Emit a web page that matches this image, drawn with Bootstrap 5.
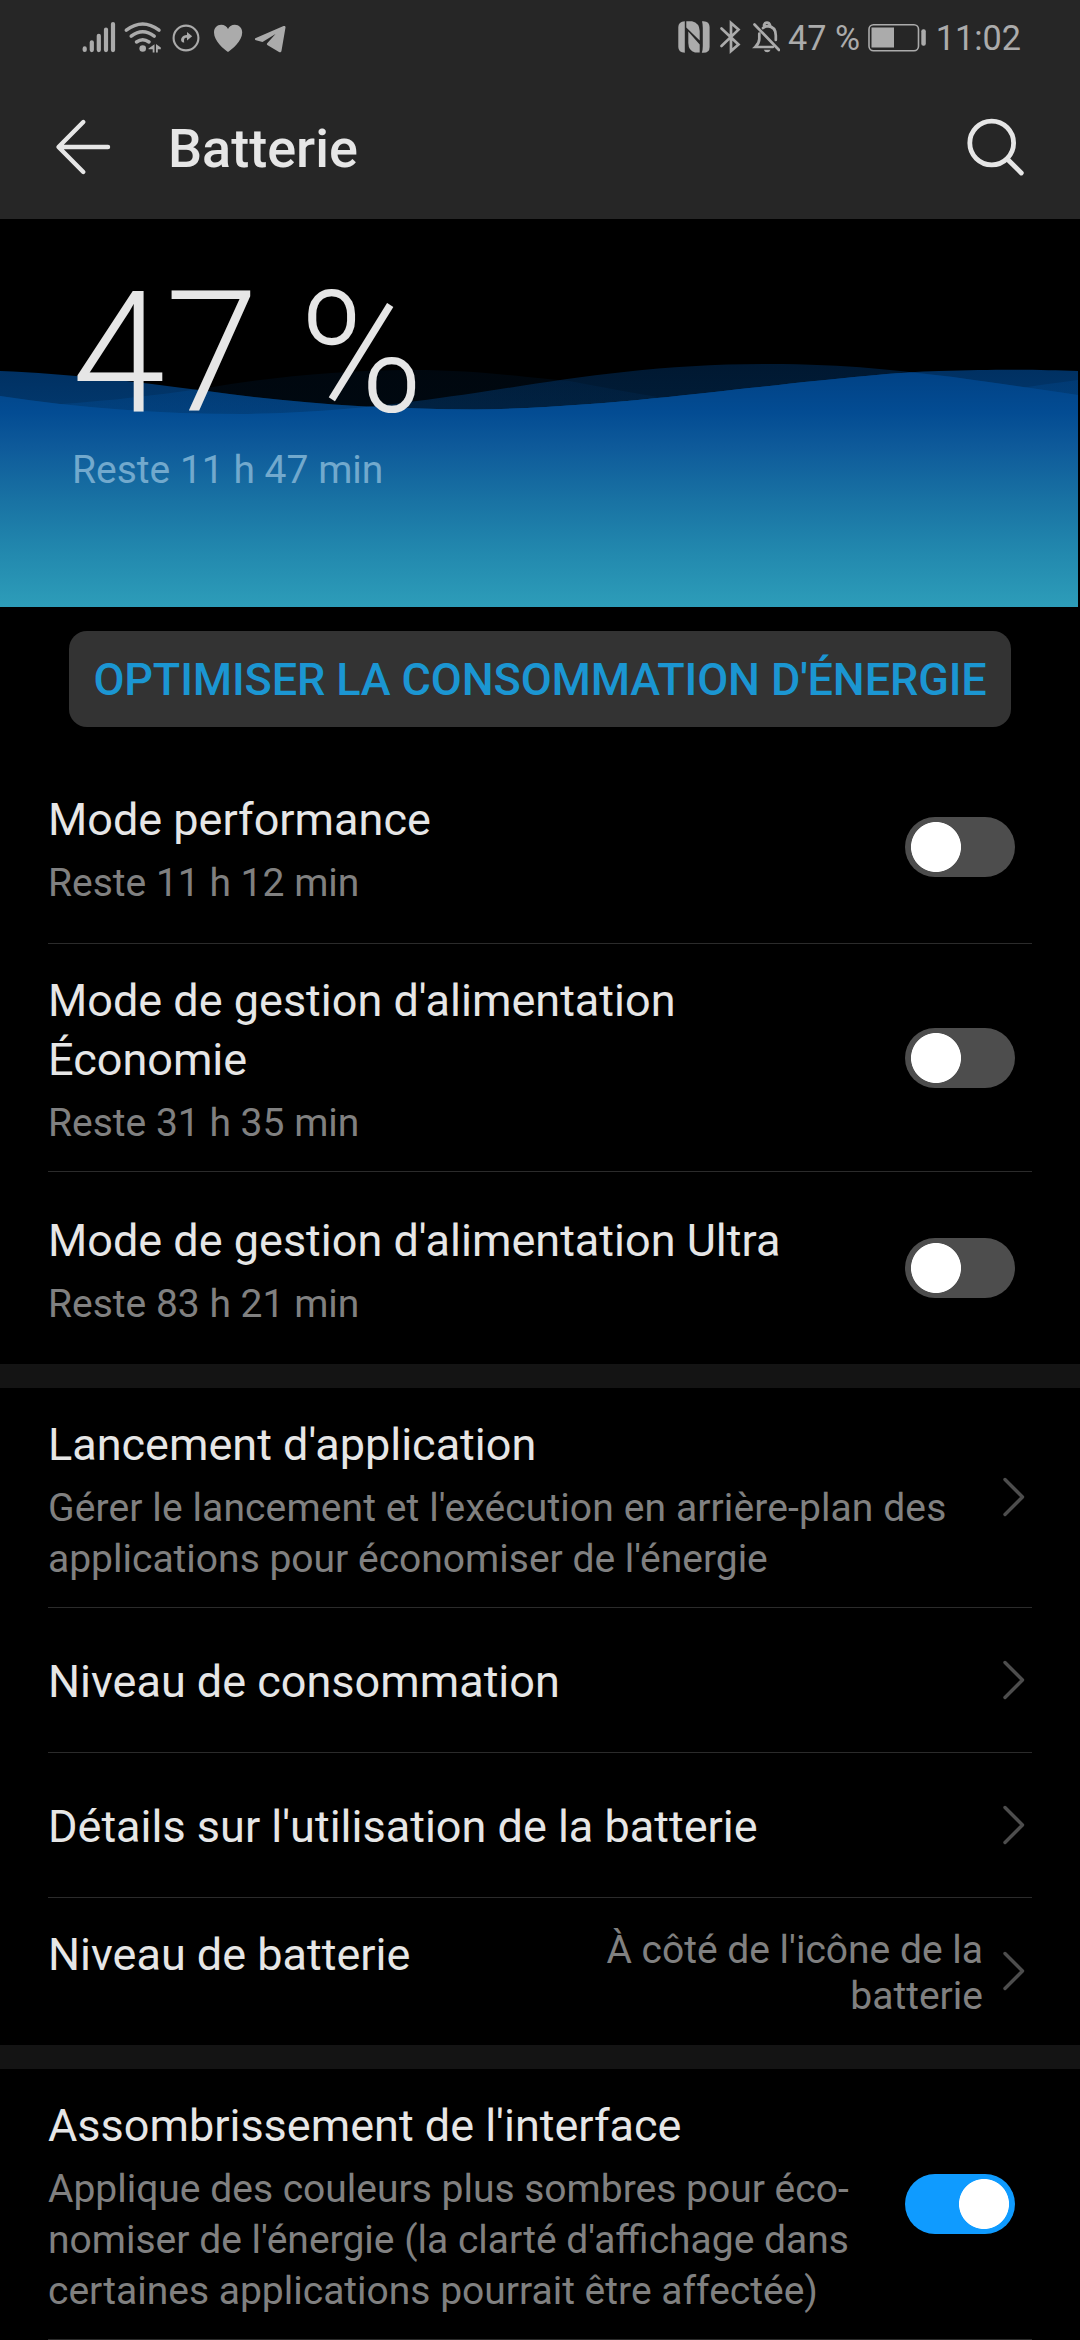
<!DOCTYPE html>
<html lang="fr">
<head>
<meta charset="utf-8">
<meta name="viewport" content="width=device-width, initial-scale=1">
<title>Batterie</title>
<link href="https://cdn.jsdelivr.net/npm/bootstrap@5.3.0/dist/css/bootstrap.min.css" rel="stylesheet">
<style>
  body { width: 1080px; height: 2340px; overflow: hidden; background: #000; color: #e6e6e6; font-family: Roboto, "Noto Sans", sans-serif; }
  svg { display: block; flex: none; }
  .top-area { height: 219px; background: #262626; }
  .status-bar { height: 76px; font-size: 34.2px; line-height: 76px; color: #ababab; }
  .clock { margin: 0 59px 0 8px; }
  .app-bar { height: 142px; padding: 0 54px 0 54px; }
  .app-title { font-size: 54px; line-height: 64px; font-weight: 500; margin: 4px 0 0 56px; }
  .hero { height: 388px; }
  .hero-text { padding: 55px 0 0 72px; }
  .hero-level { font-size: 168px; line-height: 160px; font-weight: 300; }
  .hero-left { font-size: 39px; line-height: 51px; color: #72a9cd; margin-top: 11px; }
  .optimize { margin: 24px 69px 24px 69px; height: 96px; border-radius: 18px; background: #333; color: #1b96d2; font-size: 45px; font-weight: 500; line-height: 97px; letter-spacing: -.13px; }
  .setting { margin: 0 48px; border-bottom: 1px solid #2b2b2b; white-space: nowrap; }
  .setting.last-item { border-bottom: 0; }
  .setting-text { padding-top: 3px; }
  .setting-title { font-size: 45px; line-height: 59px; }
  .setting-sub { font-size: 39px; line-height: 51px; color: #808080; margin: 9px 0 -1px; }
  .wide-line { letter-spacing: .11px; }
  .setting-value { font-size: 39px; line-height: 46.5px; color: #808080; padding-top: 3px; margin-right: 18px; }
  .band { height: 24px; background: #141414; }
  .switch-input.form-check-input { width: 110px; height: 60px; margin: 0 17px 0 0; flex: none; background-color: #4d4d4d; background-size: 100% 100%; background-position: 0 0; background-image: radial-gradient(circle at 31px 30px, #fff 24.6px, transparent 25.4px); }
  .switch-input.form-check-input:checked[type=checkbox] { background-color: #0f9bff; background-image: radial-gradient(circle at 79px 30px, #fff 24.6px, transparent 25.4px); }
  .chev { margin: 0 5px 1px 0; }
  .title-top { padding-top: 27px; }
  .h-a { height: 193px; } .h-b { height: 228px; } .h-c { height: 192px; }
  .h-d { height: 220px; } .h-e { height: 145px; } .h-f { height: 147px; } .h-g { height: 271px; }
</style>
</head>
<body>
<header class="top-area">
  <div class="status-bar d-flex align-items-start">
    <svg width="780" height="76" viewBox="0 0 780 76" fill="#ababab">
      <g stroke="#ababab" stroke-width="4.2" stroke-linecap="round">
        <path d="M84.700 48.400v1.600M91.800 42.300v7.800M98.800 35.800v14.300M106 29.500v20.600M113 24v26.100"/>
      </g>
      <g fill="none" stroke="#ababab" stroke-width="3.500" stroke-linecap="round">
        <path d="M126.300 30.200Q142.700 17.800 159 30.200M131.200 36.200Q142.700 27.200 154.200 36.200M136.500 42Q142.700 37.500 149 42"/>
      </g>
      <circle cx="142.700" cy="48.500" r="3.300"/>
      <path d="M148.500 48.600l6-4.400v8.300h-1.800v-3.200h-4.200zM156 44l4.800 3.600v1.700h-3v3.200h-1.800z"/>
      <circle cx="186" cy="38" r="12.400" fill="none" stroke="#ababab" stroke-width="2.100"/>
      <path d="M184.300 42.600C181.500 42.600 180.500 40.300 181.400 38.200C182.500 35.700 184.900 34.900 187 35V32.100L192.200 36.300L187 40.400V37.700C184.600 37.500 183.500 38.700 184.300 42.600z"/>
      <path d="M228 52C224 49.500 214 41 214 32.500C214 28 217 24.800 221.200 24.800C224.500 24.800 226.900 26.500 228 29C229.100 26.500 231.500 24.800 234.800 24.800C239 24.800 242.200 28 242.200 32.500C242.200 41 232 49.500 228 52z"/>
      <path d="M255.300 38.200C254.500 39 255 40 256 40.300L262.500 42L275.500 34L267 43.500C266.700 44 266.800 44.600 267.300 45L279 52C280.300 52.700 281.300 52.200 281.500 50.800L285.500 27.500C285.700 26.200 284.800 25.600 283.500 26.100Z"/>
      <path d="M684.800 21.200V52.800Q678.300 52.500 678.300 47V27Q678.300 21.800 684.800 21.200ZM686.300 21.200H692Q699.500 23 699.700 31V40.500L686.300 27.500ZM688.300 31.500L699.700 44.500V52.500H695Q688.500 51 688.300 43ZM702 21.200H703.500Q709.600 21.500 709.600 27V47Q709.600 52.800 703.500 52.800H701.800Q702.800 50 702.800 46V28Q702.800 24 702 21.200Z"/>
      <path d="M721.500 28.500L738.500 44.500L731 51V23L738.500 29.600L721.500 46" fill="none" stroke="#ababab" stroke-width="2.700" stroke-linecap="round"/>
      <path d="M754.500 24.500L779 50" stroke="#ababab" stroke-width="2.700" stroke-linecap="round"/>
      <path d="M759.300 33.500v5.500q0 4-4 8h17.500M763 28q2-1.800 4.500-1.900 8.300.4 8.300 9.400v4.500M764 25.200q.8-2.500 3-2.500t3 2.500" fill="none" stroke="#ababab" stroke-width="2.700" stroke-linecap="round"/>
      <path d="M763.800 49.700h6.800q-1 2.600-3.400 2.600t-3.400-2.600z"/>
    </svg>
    <span class="ms-2">47 %</span>
    <svg class="ms-auto" width="62" height="76" viewBox="866 0 62 76">
      <rect x="869" y="24.700" width="49.500" height="26" rx="4.500" fill="none" stroke="#ababab" stroke-width="1.600"/>
      <rect x="871.500" y="27.500" width="22.500" height="20" fill="#ababab"/>
      <rect x="921.300" y="29.300" width="4.500" height="16.500" rx="2" fill="#ababab"/>
    </svg>
    <span class="clock">11:02</span>
  </div>
  <div class="app-bar d-flex align-items-center">
    <svg width="58" height="60" viewBox="54 117 58 60" fill="none" stroke="#e6e6e6" stroke-width="4.400" stroke-linecap="round" stroke-linejoin="round"><path d="M83.300 122L58.500 147L83.300 172M59 147H108"/></svg>
    <h1 class="app-title mb-0">Batterie</h1>
    <svg class="ms-auto" width="60" height="60" viewBox="966 117 60 60" fill="none" stroke="#e6e6e6" stroke-width="4.800" stroke-linecap="round"><circle cx="991.700" cy="143" r="21.900"/><path d="M1008 159.700L1021.300 173"/></svg>
  </div>
</header>

<section class="hero position-relative">
  <svg class="position-absolute top-0 start-0" width="1080" height="388" viewBox="0 219 1080 388">
    <defs>
      <linearGradient id="sea" gradientUnits="userSpaceOnUse" x1="0" y1="364" x2="0" y2="607">
        <stop offset="0" stop-color="#004083"/><stop offset=".2" stop-color="#034c93"/><stop offset=".34" stop-color="#0e5a9a"/>
        <stop offset=".55" stop-color="#1871a3"/><stop offset=".77" stop-color="#2288ae"/><stop offset="1" stop-color="#2d9db9"/>
      </linearGradient>
      <path id="wave-a" d="M0 371C70 374 130 381 207 391C290 403 380 409.500 475 409.500C590 408 700 393 760 387C840 378 900 372 939 371C1000 369 1040 369.500 1078 371V607H0Z"/>
      <path id="wave-b" d="M0 407C90 404 150 396 207 388C270 377 350 369.500 413 370C480 370 530 378 569 381C620 390 700 409 810 409.500C900 410 970 394 1078 380V607H0Z"/>
      <path id="wave-c" d="M0 396C80 408 160 414 241 414C340 413 410 402 475 393C560 380 650 364 767 364C850 364 900 371 953 377C1000 384 1040 389 1078 395V607H0Z"/>
      <clipPath id="in-a"><use href="#wave-a"/></clipPath>
    </defs>
    <use href="#wave-b" fill="url(#sea)" opacity=".11"/>
    <use href="#wave-c" fill="url(#sea)" opacity=".38"/>
    <use href="#wave-a" fill="url(#sea)" opacity=".74"/>
    <g clip-path="url(#in-a)">
      <use href="#wave-b" fill="url(#sea)" opacity=".35"/>
      <use href="#wave-c" fill="url(#sea)"/>
    </g>
  </svg>
  <div class="hero-text position-relative">
    <div class="hero-level">47 %</div>
    <div class="hero-left">Reste 11 h 47 min</div>
  </div>
</section>

<div class="optimize text-center text-nowrap">OPTIMISER LA CONSOMMATION D'ÉNERGIE</div>

<main>
  <div class="setting h-a d-flex align-items-center justify-content-between">
    <div class="setting-text"><div class="setting-title">Mode performance</div><div class="setting-sub">Reste 11 h 12 min</div></div>
    <input class="form-check-input switch-input rounded-pill border-0" type="checkbox" role="switch" aria-label="Mode performance">
  </div>
  <div class="setting h-b d-flex align-items-center justify-content-between">
    <div class="setting-text"><div class="setting-title">Mode de gestion d'alimentation<br>Économie</div><div class="setting-sub">Reste 31 h 35 min</div></div>
    <input class="form-check-input switch-input rounded-pill border-0" type="checkbox" role="switch" aria-label="Économie">
  </div>
  <div class="setting last-item h-c d-flex align-items-center justify-content-between">
    <div class="setting-text"><div class="setting-title">Mode de gestion d'alimentation Ultra</div><div class="setting-sub">Reste 83 h 21 min</div></div>
    <input class="form-check-input switch-input rounded-pill border-0" type="checkbox" role="switch" aria-label="Ultra">
  </div>
  <div class="band"></div>
  <div class="setting h-d d-flex align-items-center justify-content-between">
    <div class="setting-text"><div class="setting-title">Lancement d'application</div><div class="setting-sub"><span class="wide-line">Gérer le lancement et l'exécution en arrière-plan des</span><br>applications pour économiser de l'énergie</div></div>
    <svg class="chev" width="26" height="42" viewBox="0 0 26 42" fill="none" stroke="#4d4d4d" stroke-width="3.400" stroke-linecap="round" stroke-linejoin="round"><path d="M4 3.500L21.500 21L4 38.500"/></svg>
  </div>
  <div class="setting h-e d-flex align-items-center justify-content-between">
    <div class="setting-text"><div class="setting-title">Niveau de consommation</div></div>
    <svg class="chev" width="26" height="42" viewBox="0 0 26 42" fill="none" stroke="#4d4d4d" stroke-width="3.400" stroke-linecap="round" stroke-linejoin="round"><path d="M4 3.500L21.500 21L4 38.500"/></svg>
  </div>
  <div class="setting h-e d-flex align-items-center justify-content-between">
    <div class="setting-text"><div class="setting-title">Détails sur l'utilisation de la batterie</div></div>
    <svg class="chev" width="26" height="42" viewBox="0 0 26 42" fill="none" stroke="#4d4d4d" stroke-width="3.400" stroke-linecap="round" stroke-linejoin="round"><path d="M4 3.500L21.500 21L4 38.500"/></svg>
  </div>
  <div class="setting last-item h-f d-flex align-items-center">
    <div class="setting-title title-top align-self-start">Niveau de batterie</div>
    <div class="setting-value ms-auto text-end">À côté de l'icône de la<br>batterie</div>
    <svg class="chev" width="26" height="42" viewBox="0 0 26 42" fill="none" stroke="#4d4d4d" stroke-width="3.400" stroke-linecap="round" stroke-linejoin="round"><path d="M4 3.500L21.500 21L4 38.500"/></svg>
  </div>
  <div class="band"></div>
  <div class="setting h-g d-flex align-items-center justify-content-between">
    <div class="setting-text"><div class="setting-title">Assombrissement de l'interface</div><div class="setting-sub">Applique des couleurs plus sombres pour éco-<br>nomiser de l'énergie (la clarté d'affichage dans<br>certaines applications pourrait être affectée)</div></div>
    <input class="form-check-input switch-input rounded-pill border-0" type="checkbox" role="switch" checked aria-label="Assombrissement de l'interface">
  </div>
</main>
<script src="https://cdn.jsdelivr.net/npm/bootstrap@5.3.0/dist/js/bootstrap.bundle.min.js"></script>
</body>
</html>
